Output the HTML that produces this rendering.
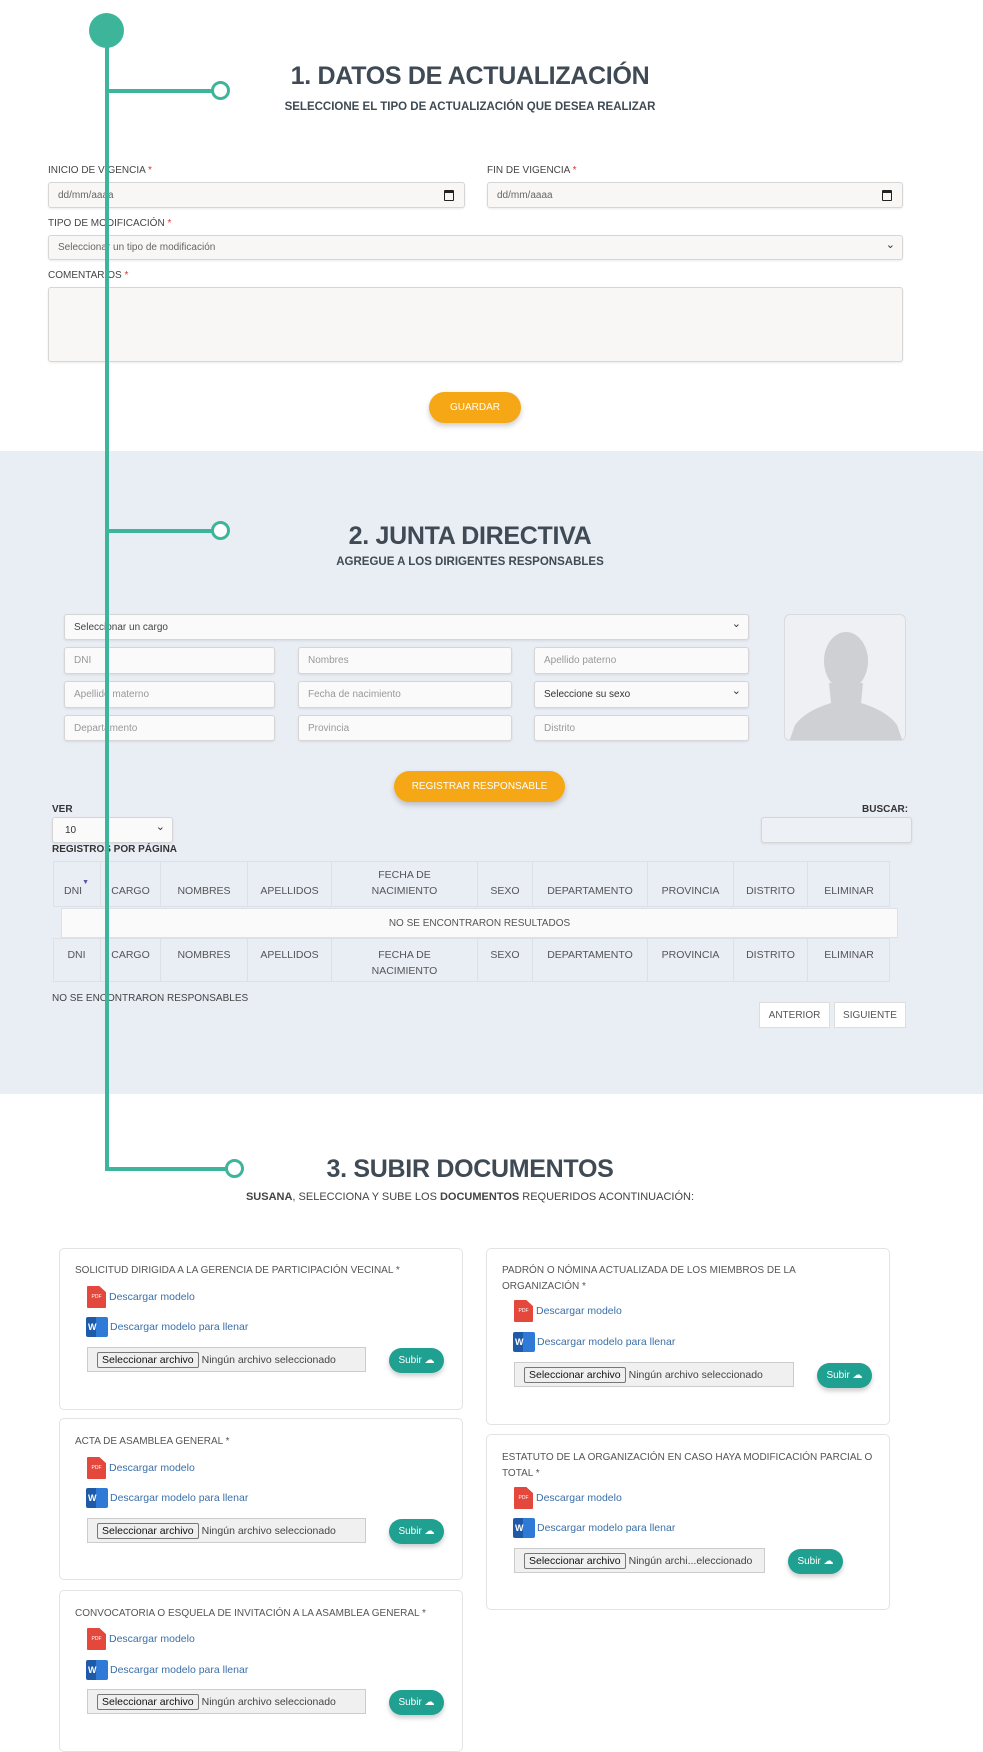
<!DOCTYPE html>
<html><head><meta charset="utf-8"><style>
*{box-sizing:border-box;margin:0;padding:0}
body{width:983px;height:1721px;position:relative;overflow:hidden;background:#fff;font-family:"Liberation Sans",sans-serif;color:#555}
.a{position:absolute}
.gray{position:absolute;left:0;top:451px;width:983px;height:643px;background:#e9edf4}
.h1{position:absolute;left:0;width:940px;text-align:center;font-size:25px;font-weight:bold;color:#3f4a54;letter-spacing:-0.3px}
.h2{position:absolute;left:0;width:940px;text-align:center;font-size:11.5px;font-weight:bold;color:#3f4a54}
.lbl{position:absolute;font-size:10px;color:#444}
.lbl b{color:#d33;font-weight:normal}
.inp{position:absolute;background:#f8f7f5;border:1px solid #d6d6d6;border-radius:3px;font-size:10px;color:#666;padding-left:9px;display:flex;align-items:center;box-shadow:0 1px 2px rgba(0,0,0,.08)}
.inp.w{background:#fafafa}
.sel:after{content:"⌄";position:absolute;right:7px;top:2px;font-size:11px;color:#333}
.cal{position:absolute;right:10px;top:7px;width:10px;height:11px;border:1.5px solid #222;border-top-width:3px;border-radius:1px}
.btn{position:absolute;background:#f5a716;color:#fff;font-size:10px;border-radius:16px;display:flex;align-items:center;justify-content:center;box-shadow:0 3px 6px rgba(0,0,0,.2)}
.line{position:absolute;background:#3db59a;z-index:10}
.ring{position:absolute;width:19px;height:19px;border:3px solid #3db59a;border-radius:50%;background:#fff;z-index:10}
.th{position:absolute;display:flex;align-items:flex-end;justify-content:center;text-align:center;font-size:10.5px;color:#555;border-right:1px solid #dde1e7;padding-bottom:8px;line-height:16px}
.card{position:absolute;border:1px solid #e3e3e3;border-radius:5px;background:#fff}
.ct{position:absolute;font-size:10px;color:#555;line-height:16px}
.lk{position:absolute;font-size:10.5px;color:#3a6fa8;display:flex;align-items:center}
.pdf{width:19px;height:22px;background:#e4483d;border-radius:1px;color:#fff;font-size:5px;display:flex;align-items:center;justify-content:center;margin-right:3px;clip-path:polygon(0 0,65% 0,100% 28%,100% 100%,0 100%)}
.wd{width:22px;height:20px;background:linear-gradient(90deg,#1f5aa8 45%,#2f7ad6 45%);color:#fff;font-size:9px;font-weight:bold;display:flex;align-items:center;padding-left:2px;margin-right:2px;border-radius:2px}
.file{position:absolute;height:25px;background:#f0f0f0;border:1px solid #ccc;font-size:10.5px;color:#444;display:flex;align-items:center;padding-left:9px;white-space:nowrap;overflow:hidden}
.file span{border:1px solid #777;background:#efefef;padding:1px 4px;margin-right:3px;color:#111;border-radius:2px}
.sub{position:absolute;width:55px;height:25px;background:#1fa090;color:#fff;font-size:10px;border-radius:13px;display:flex;align-items:center;justify-content:center;box-shadow:0 3px 5px rgba(0,0,0,.2)}
</style></head><body>
<div class="gray"></div>

<!-- timeline -->
<div class="line" style="left:105px;top:30px;width:4px;height:1141px"></div>
<div class="a" style="left:89px;top:13px;width:35px;height:35px;border-radius:50%;background:#3db59a;z-index:10"></div>
<div class="line" style="left:107px;top:89px;width:108px;height:4px"></div>
<div class="ring" style="left:211px;top:81px"></div>
<div class="line" style="left:107px;top:529px;width:108px;height:4px"></div>
<div class="ring" style="left:211px;top:521px"></div>
<div class="line" style="left:105px;top:1167px;width:124px;height:4px"></div>
<div class="ring" style="left:225px;top:1159px"></div>

<!-- Section 1 -->
<div class="h1" style="top:62px;left:0;width:940px">1. DATOS DE ACTUALIZACIÓN</div>
<div class="h2" style="top:101px">SELECCIONE EL TIPO DE ACTUALIZACIÓN QUE DESEA REALIZAR</div>
<div class="lbl" style="left:48px;top:165px">INICIO DE VIGENCIA <b>*</b></div>
<div class="lbl" style="left:487px;top:165px">FIN DE VIGENCIA <b>*</b></div>
<div class="inp" style="left:48px;top:182px;width:417px;height:26px">dd/mm/aaaa<div class="cal"></div></div>
<div class="inp" style="left:487px;top:182px;width:416px;height:26px">dd/mm/aaaa<div class="cal"></div></div>
<div class="lbl" style="left:48px;top:218px">TIPO DE MODIFICACIÓN <b>*</b></div>
<div class="inp sel" style="left:48px;top:235px;width:855px;height:25px">Seleccionar un tipo de modificación</div>
<div class="lbl" style="left:48px;top:270px">COMENTARIOS <b>*</b></div>
<div class="inp" style="left:48px;top:287px;width:855px;height:75px"></div>
<div class="btn" style="left:429px;top:392px;width:92px;height:31px">GUARDAR</div>

<!-- Section 2 -->
<div class="h1" style="top:522px">2. JUNTA DIRECTIVA</div>
<div class="h2" style="top:556px">AGREGUE A LOS DIRIGENTES RESPONSABLES</div>
<div class="inp w sel" style="left:64px;top:614px;width:685px;height:26px;color:#444">Seleccionar un cargo</div>
<div class="inp w" style="left:64px;top:647px;width:211px;height:27px;color:#999">DNI</div>
<div class="inp w" style="left:298px;top:647px;width:214px;height:27px;color:#999">Nombres</div>
<div class="inp w" style="left:534px;top:647px;width:215px;height:27px;color:#999">Apellido paterno</div>
<div class="inp w" style="left:64px;top:681px;width:211px;height:27px;color:#999">Apellido materno</div>
<div class="inp w" style="left:298px;top:681px;width:214px;height:27px;color:#999">Fecha de nacimiento</div>
<div class="inp w sel" style="left:534px;top:681px;width:215px;height:27px;color:#333">Seleccione su sexo</div>
<div class="inp w" style="left:64px;top:715px;width:211px;height:26px;color:#999">Departamento</div>
<div class="inp w" style="left:298px;top:715px;width:214px;height:26px;color:#999">Provincia</div>
<div class="inp w" style="left:534px;top:715px;width:215px;height:26px;color:#999">Distrito</div>
<div class="a" style="left:784px;top:614px;width:122px;height:127px;background:#eef0f4;border:1px solid #d8dbe0;border-radius:6px;overflow:hidden">
<svg width="122" height="127" viewBox="0 0 122 127"><ellipse cx="61" cy="46" rx="22" ry="29" fill="#cfd0d3"/><path d="M44 68 L46 88 Q20 96 10 110 L4 127 L118 127 L112 110 Q102 96 76 88 L78 68 Z" fill="#cfd0d3"/></svg></div>
<div class="btn" style="left:394px;top:771px;width:171px;height:31px">REGISTRAR RESPONSABLE</div>
<div class="lbl" style="left:52px;top:804px;font-weight:bold;color:#333">VER</div>
<div class="inp w sel" style="left:52px;top:817px;width:121px;height:26px;color:#333;padding-left:12px">10</div>
<div class="lbl" style="left:52px;top:844px;font-weight:bold;color:#333">REGISTROS POR PÁGINA</div>
<div class="lbl" style="left:862px;top:804px;font-weight:bold;color:#333">BUSCAR:</div>
<div class="inp" style="left:761px;top:817px;width:151px;height:26px;background:#edf0f4"></div>

<div class="a" style="left:53px;top:861px;width:837px;height:46px;border:1px solid #dde1e7"></div>
<div class="th" style="left:53px;top:861px;width:48px;height:46px">DNI<span style="color:#55a;font-size:7px;margin-bottom:8px">▼</span></div>
<div class="th" style="left:101px;top:861px;width:60px;height:46px">CARGO</div>
<div class="th" style="left:161px;top:861px;width:87px;height:46px">NOMBRES</div>
<div class="th" style="left:248px;top:861px;width:84px;height:46px">APELLIDOS</div>
<div class="th" style="left:332px;top:861px;width:146px;height:46px">FECHA DE<br>NACIMIENTO</div>
<div class="th" style="left:478px;top:861px;width:55px;height:46px">SEXO</div>
<div class="th" style="left:533px;top:861px;width:115px;height:46px">DEPARTAMENTO</div>
<div class="th" style="left:648px;top:861px;width:86px;height:46px">PROVINCIA</div>
<div class="th" style="left:734px;top:861px;width:74px;height:46px">DISTRITO</div>
<div class="th" style="left:808px;top:861px;width:82px;height:46px;border-right:0">ELIMINAR</div>
<div class="a" style="left:61px;top:908px;width:837px;height:30px;background:#fafafa;border:1px solid #dde1e7;font-size:10px;display:flex;align-items:center;justify-content:center">NO SE ENCONTRARON RESULTADOS</div>
<div class="a" style="left:53px;top:938px;width:837px;height:44px;border:1px solid #dde1e7"></div>
<div class="th" style="left:53px;top:938px;width:48px;height:44px;align-items:flex-start;padding-top:9px">DNI</div>
<div class="th" style="left:101px;top:938px;width:60px;height:44px;align-items:flex-start;padding-top:9px">CARGO</div>
<div class="th" style="left:161px;top:938px;width:87px;height:44px;align-items:flex-start;padding-top:9px">NOMBRES</div>
<div class="th" style="left:248px;top:938px;width:84px;height:44px;align-items:flex-start;padding-top:9px">APELLIDOS</div>
<div class="th" style="left:332px;top:938px;width:146px;height:44px;align-items:flex-start;padding-top:9px">FECHA DE<br>NACIMIENTO</div>
<div class="th" style="left:478px;top:938px;width:55px;height:44px;align-items:flex-start;padding-top:9px">SEXO</div>
<div class="th" style="left:533px;top:938px;width:115px;height:44px;align-items:flex-start;padding-top:9px">DEPARTAMENTO</div>
<div class="th" style="left:648px;top:938px;width:86px;height:44px;align-items:flex-start;padding-top:9px">PROVINCIA</div>
<div class="th" style="left:734px;top:938px;width:74px;height:44px;align-items:flex-start;padding-top:9px">DISTRITO</div>
<div class="th" style="left:808px;top:938px;width:82px;height:44px;align-items:flex-start;padding-top:9px;border-right:0">ELIMINAR</div>
<div class="lbl" style="left:52px;top:993px">NO SE ENCONTRARON RESPONSABLES</div>
<div class="a" style="left:759px;top:1002px;width:71px;height:26px;background:#fff;border:1px solid #ddd;font-size:10px;display:flex;align-items:center;justify-content:center">ANTERIOR</div>
<div class="a" style="left:834px;top:1002px;width:72px;height:26px;background:#fff;border:1px solid #ddd;font-size:10px;display:flex;align-items:center;justify-content:center">SIGUIENTE</div>

<!-- Section 3 -->
<div class="h1" style="top:1155px">3. SUBIR DOCUMENTOS</div>
<div class="a" style="left:0;width:940px;top:1191px;text-align:center;font-size:11px;color:#444"><b>SUSANA</b>, SELECCIONA Y SUBE LOS <b>DOCUMENTOS</b> REQUERIDOS ACONTINUACIÓN:</div>

<div class="card" style="left:59px;top:1248px;width:404px;height:162px"></div>
<div class="ct" style="left:75px;top:1263px">SOLICITUD DIRIGIDA A LA GERENCIA DE PARTICIPACIÓN VECINAL *</div>
<div class="lk" style="left:87px;top:1286px"><div class="pdf">PDF</div>Descargar modelo</div>
<div class="lk" style="left:86px;top:1317px"><div class="wd">W</div>Descargar modelo para llenar</div>
<div class="file" style="left:87px;top:1347px;width:279px"><span>Seleccionar archivo</span>Ningún archivo seleccionado</div>
<div class="sub" style="left:389px;top:1348px">Subir ☁</div>

<div class="card" style="left:59px;top:1418px;width:404px;height:162px"></div>
<div class="ct" style="left:75px;top:1434px">ACTA DE ASAMBLEA GENERAL *</div>
<div class="lk" style="left:87px;top:1457px"><div class="pdf">PDF</div>Descargar modelo</div>
<div class="lk" style="left:86px;top:1488px"><div class="wd">W</div>Descargar modelo para llenar</div>
<div class="file" style="left:87px;top:1518px;width:279px"><span>Seleccionar archivo</span>Ningún archivo seleccionado</div>
<div class="sub" style="left:389px;top:1519px">Subir ☁</div>

<div class="card" style="left:59px;top:1590px;width:404px;height:162px"></div>
<div class="ct" style="left:75px;top:1606px">CONVOCATORIA O ESQUELA DE INVITACIÓN A LA ASAMBLEA GENERAL *</div>
<div class="lk" style="left:87px;top:1628px"><div class="pdf">PDF</div>Descargar modelo</div>
<div class="lk" style="left:86px;top:1660px"><div class="wd">W</div>Descargar modelo para llenar</div>
<div class="file" style="left:87px;top:1689px;width:279px"><span>Seleccionar archivo</span>Ningún archivo seleccionado</div>
<div class="sub" style="left:389px;top:1690px">Subir ☁</div>

<div class="card" style="left:486px;top:1248px;width:404px;height:177px"></div>
<div class="ct" style="left:502px;top:1263px;width:340px">PADRÓN O NÓMINA ACTUALIZADA DE LOS MIEMBROS DE LA ORGANIZACIÓN *</div>
<div class="lk" style="left:514px;top:1300px"><div class="pdf">PDF</div>Descargar modelo</div>
<div class="lk" style="left:513px;top:1332px"><div class="wd">W</div>Descargar modelo para llenar</div>
<div class="file" style="left:514px;top:1362px;width:280px"><span>Seleccionar archivo</span>Ningún archivo seleccionado</div>
<div class="sub" style="left:817px;top:1363px">Subir ☁</div>

<div class="card" style="left:486px;top:1434px;width:404px;height:176px"></div>
<div class="ct" style="left:502px;top:1450px;width:380px">ESTATUTO DE LA ORGANIZACIÓN EN CASO HAYA MODIFICACIÓN PARCIAL O TOTAL *</div>
<div class="lk" style="left:514px;top:1487px"><div class="pdf">PDF</div>Descargar modelo</div>
<div class="lk" style="left:513px;top:1518px"><div class="wd">W</div>Descargar modelo para llenar</div>
<div class="file" style="left:514px;top:1548px;width:251px"><span>Seleccionar archivo</span>Ningún archi...eleccionado</div>
<div class="sub" style="left:788px;top:1549px">Subir ☁</div>
</body></html>
